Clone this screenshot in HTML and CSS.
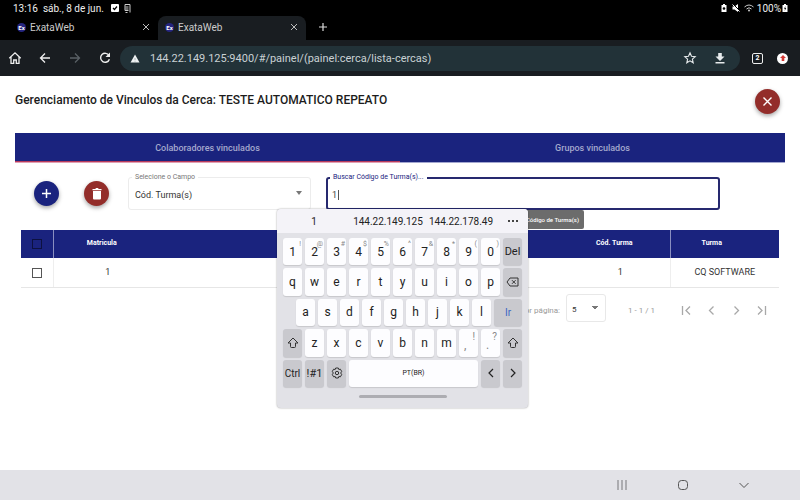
FILE: index.html
```html
<!DOCTYPE html>
<html lang="pt-BR">
<head>
<meta charset="utf-8">
<meta name="viewport" content="width=device-width, initial-scale=1">
<title>ExataWeb</title>
<link rel="stylesheet" href="styles.css">
</head>
<body>
<header class="status">
  <span>13:16</span>
  <span class="date">sáb., 8 de jun.</span>
  <svg width="8" height="8" viewBox="0 0 8 8"><rect width="8" height="8" rx="1" fill="#fff"/><path d="M2 4l1.500 1.500L6 2.500" fill="none" stroke="#000" stroke-width="1.200"/></svg>
  <svg class="doc" width="7" height="9" viewBox="0 0 7 9"><path d="M1 0.500h5v8M1.500 3h3M1.500 5h3M1 0.500v6h3.500M1.500 8.500h2" fill="none" stroke="#ccc"/></svg>
  <span class="push"></span>
  <svg width="6" height="8" viewBox="0 0 6 8"><path d="M0.500 1h1.500V0h2v1h1.500v7h-5z" fill="#fff"/><circle cx="3" cy="4.500" r="1.300" fill="#000"/></svg>
  <svg class="mute" width="8" height="8" viewBox="0 0 8 8"><path d="M0.500 2.500h2L6 0v8L2.500 5.500h-2z" fill="#fff"/><path d="M1 0l7 7" stroke="#000"/><path d="M0.500 0.500L7.500 7.500" stroke="#fff"/></svg>
  <svg class="wifi" width="10" height="8" viewBox="0 0 10 8"><path d="M0.500 3q4.500-4 9 0M2.500 5q2.500-2.500 5 0" fill="none" stroke="#ccc"/><circle cx="5" cy="6.500" r="1" fill="#ccc"/></svg>
  <span>100%</span>
  <svg width="6" height="8" viewBox="0 0 6 8"><path d="M0.500 1h1.500V0h2v1h1.500v7h-5z" fill="#fff"/><path d="M3.500 2L2 4.700h1L2.600 7 4.200 4h-1z" fill="#000"/></svg>
</header>

<nav class="tabs" aria-label="Abas">
  <div class="tab">
    <span class="fav">Ex</span><span class="name">ExataWeb</span>
    <button class="plain" aria-label="Fechar aba"><svg width="8" height="8" viewBox="0 0 8 8"><path d="M1 1l6 6M7 1L1 7" stroke="#bbb" fill="none"/></svg></button>
  </div>
  <div class="tab active">
    <span class="fav">Ex</span><span class="name">ExataWeb</span>
    <button class="plain" aria-label="Fechar aba"><svg width="8" height="8" viewBox="0 0 8 8"><path d="M1 1l6 6M7 1L1 7" stroke="#bbb" fill="none"/></svg></button>
  </div>
  <button class="plain new" aria-label="Nova aba"><svg width="10" height="10" viewBox="0 0 10 10"><path d="M5 1v8M1 5h8" stroke="#ddd" stroke-width="1.200"/></svg></button>
</nav>

<div class="toolbar">
  <button class="plain" aria-label="Início"><svg width="14" height="14" viewBox="0 0 14 14"><path d="M3 6v6.300h2.700V9h2.600v3.300H11V6M1.300 7.300L7 1.800l5.700 5.500" fill="none" stroke="#eee" stroke-width="1.300"/></svg></button>
  <button class="plain" aria-label="Voltar"><svg width="14" height="14" viewBox="0 0 14 14"><path d="M12 7H2.500M7 2.500L2.500 7 7 11.500" fill="none" stroke="#eee" stroke-width="1.300"/></svg></button>
  <button class="plain" aria-label="Avançar"><svg width="14" height="14" viewBox="0 0 14 14"><path d="M2 7h9.500M7 2.500L11.500 7 7 11.500" fill="none" stroke="#596065" stroke-width="1.300"/></svg></button>
  <button class="plain" aria-label="Recarregar"><svg width="14" height="14" viewBox="0 0 14 14"><path d="M11 4.500A4.500 4.500 0 1 0 11.400 8.200" fill="none" stroke="#eee" stroke-width="1.400"/><path d="M12 1.500V6H7.500z" fill="#eee"/></svg></button>
  <div class="omni">
    <svg width="10" height="9" viewBox="0 0 10 9"><path d="M5 0.500L9.500 8.500h-9z" fill="#eef1f2"/><path d="M5 4v2M5 6.800v.8" stroke="#9aa5a8" stroke-width=".8"/></svg>
    <input class="url" aria-label="Endereço" value="144.22.149.125:9400/#/painel/(painel:cerca/lista-cercas)">
    <button class="plain" aria-label="Favoritar"><svg width="14" height="14" viewBox="0 0 14 14"><path d="M7 1.800l1.500 3.500 3.700.3-2.800 2.500.8 3.700L7 9.900l-3.200 1.900.8-3.700L1.800 5.600l3.700-.3z" fill="none" stroke="#e6eaec" stroke-width="1.100"/></svg></button>
    <button class="plain" aria-label="Baixar"><svg width="12" height="12" viewBox="0 0 12 12"><path d="M4.200 1h3.600v3.500h2.700L6 9 1.500 4.500h2.700zM1.500 10h9v1.400h-9z" fill="#e6eaec"/></svg></button>
  </div>
  <button class="count" aria-label="2 abas abertas">2</button>
  <button class="update" aria-label="Atualização"><svg width="6" height="6" viewBox="0 0 6 6"><path d="M3 0l3 3H4.300v3H1.700V3H0z" fill="#d33a36"/></svg></button>
</div>

<main class="page">
  <div class="head">
    <h1>Gerenciamento de Vinculos da Cerca: TESTE AUTOMATICO REPEATO</h1>
    <button class="fab red" aria-label="Fechar"><svg width="11" height="11" viewBox="0 0 11 11"><path d="M1.500 1.500l8 8M9.500 1.500l-8 8" stroke="#fff" stroke-width="1.400"/></svg></button>
  </div>

  <div class="sections" role="tablist">
    <button role="tab" class="section on" aria-selected="true">Colaboradores vinculados</button>
    <button role="tab" class="section" aria-selected="false">Grupos vinculados</button>
  </div>

  <div class="filters">
    <button class="fab blue" aria-label="Adicionar"><svg width="11" height="11" viewBox="0 0 11 11"><path d="M5.500 1v9M1 5.500h9" stroke="#fff" stroke-width="1.500"/></svg></button>
    <button class="fab red" aria-label="Excluir"><svg width="12" height="14" viewBox="0 0 12 14"><path d="M2 4h8v7.500a1 1 0 0 1-1 1H3a1 1 0 0 1-1-1zM1.500 2h2.800l.7-1h2l.7 1h2.800v1.300h-9z" fill="#fff"/></svg></button>
    <div class="field pick">
      <label for="campo">Selecione o Campo</label>
      <select id="campo"><option>Cód. Turma(s)</option></select>
    </div>
    <div class="field search">
      <label for="busca">Buscar Código de Turma(s)...</label>
      <input id="busca" value="1">
      <span class="caret"></span>
      <div class="tip" role="tooltip">Buscar Código de Turma(s)</div>

      <section class="keyboard" aria-label="Teclado">
        <div class="suggest">
          <button>1</button><button>144.22.149.125</button><button>144.22.178.49</button><button aria-label="Mais"><svg width="10" height="4" viewBox="0 0 10 4"><path d="M0 1h2v2H0zM4 1h2v2H4zM8 1h2v2H8z" fill="#444"/></svg></button>
        </div>
        <div class="keys">
          <div class="row">
            <button>1<sup>!</sup></button><button>2<sup>@</sup></button><button>3<sup>#</sup></button><button>4<sup>$</sup></button><button>5<sup>%</sup></button><button>6<sup>^</sup></button><button>7<sup>&amp;</sup></button><button>8<sup>*</sup></button><button>9<sup>(</sup></button><button>0<sup>)</sup></button><button class="dark word">Del</button>
          </div>
          <div class="row">
            <button>q</button><button>w</button><button>e</button><button>r</button><button>t</button><button>y</button><button>u</button><button>i</button><button>o</button><button>p</button><button class="dark" aria-label="Apagar"><svg width="13" height="10" viewBox="0 0 13 10"><path d="M4 1h8v8H4L1 5zM6 3.200l3.600 3.600M9.600 3.200L6 6.800" fill="none" stroke="#333" stroke-linejoin="round"/></svg></button>
          </div>
          <div class="row home">
            <button>a</button><button>s</button><button>d</button><button>f</button><button>g</button><button>h</button><button>j</button><button>k</button><button>l</button><button class="dark go">Ir</button>
          </div>
          <div class="row">
            <button class="dark" aria-label="Maiúsculas"><svg width="12" height="12" viewBox="0 0 12 12"><path d="M6 1l5 5H8.500v3.500a1 1 0 0 1-1 1h-3a1 1 0 0 1-1-1V6H1z" fill="none" stroke="#333" stroke-linejoin="round"/></svg></button><button>z</button><button>x</button><button>c</button><button>v</button><button>b</button><button>n</button><button>m</button><button class="punct">,<sup>!</sup></button><button class="punct">.<sup>?</sup></button><button class="dark" aria-label="Maiúsculas"><svg width="12" height="12" viewBox="0 0 12 12"><path d="M6 1l5 5H8.500v3.500a1 1 0 0 1-1 1h-3a1 1 0 0 1-1-1V6H1z" fill="none" stroke="#333" stroke-linejoin="round"/></svg></button>
          </div>
          <div class="row">
            <button class="dark ctrl">Ctrl</button><button class="dark word">!#1</button><button class="dark" aria-label="Configurações"><svg width="12" height="12" viewBox="0 0 12 12"><path d="M4.700 1h2.600l.5 1.500 1.600-.3 1.300 2.200L9.700 6l1 1.600-1.300 2.200-1.600-.3L7.300 11H4.700l-.5-1.500-1.600.3-1.300-2.200L2.300 6l-1-1.600 1.300-2.200 1.600.3z" fill="none" stroke="#333" stroke-linejoin="round"/><circle cx="6" cy="6" r="1.700" fill="none" stroke="#333"/></svg></button><button class="space">PT(BR)</button><button class="dark" aria-label="Esquerda"><svg width="8" height="12" viewBox="0 0 8 12"><path d="M6 2L2 6l4 4" fill="none" stroke="#222" stroke-width="1.200"/></svg></button><button class="dark" aria-label="Direita"><svg width="8" height="12" viewBox="0 0 8 12"><path d="M2 2l4 4-4 4" fill="none" stroke="#222" stroke-width="1.200"/></svg></button>
          </div>
        </div>
        <div class="handle"></div>
      </section>
    </div>
  </div>

  <table>
    <colgroup><col class="c-check"><col class="c-mat"><col><col class="c-cod"><col class="c-tur"></colgroup>
    <thead><tr><th class="line"><input type="checkbox" aria-label="Selecionar todos"></th><th>Matricula</th><th></th><th class="line">Cód. Turma</th><th class="last">Turma</th></tr></thead>
    <tbody><tr><td class="line"><input type="checkbox" aria-label="Selecionar linha"></td><td>1</td><td></td><td class="line">1</td><td>CQ SOFTWARE</td></tr></tbody>
  </table>

  <div class="pager">
    <label for="itens">Itens por página:</label>
    <select id="itens"><option>5</option></select>
    <span class="range">1 - 1 / 1</span>
    <button class="plain" aria-label="Primeira página"><svg width="11" height="11" viewBox="0 0 11 11"><path d="M1.500 1v9M9 1.500l-4 4 4 4" fill="none" stroke="#a8a8a8" stroke-width="1.300"/></svg></button>
    <button class="plain" aria-label="Página anterior"><svg width="11" height="11" viewBox="0 0 11 11"><path d="M7.500 1.500l-4 4 4 4" fill="none" stroke="#a8a8a8" stroke-width="1.300"/></svg></button>
    <button class="plain" aria-label="Próxima página"><svg width="11" height="11" viewBox="0 0 11 11"><path d="M3.500 1.500l4 4-4 4" fill="none" stroke="#a8a8a8" stroke-width="1.300"/></svg></button>
    <button class="plain" aria-label="Última página"><svg width="11" height="11" viewBox="0 0 11 11"><path d="M9.500 1v9M2 1.500l4 4-4 4" fill="none" stroke="#a8a8a8" stroke-width="1.300"/></svg></button>
  </div>
</main>

<footer class="navbar">
  <button class="plain" aria-label="Recentes"><svg width="12" height="12" viewBox="0 0 12 12"><path d="M2 1v10M6 1v10M10 1v10" stroke="#77777b"/></svg></button>
  <button class="plain" aria-label="Início"><svg width="12" height="12" viewBox="0 0 12 12"><rect x="1.500" y="1.500" width="9" height="9" rx="3" fill="none" stroke="#555"/></svg></button>
  <button class="plain" aria-label="Ocultar teclado"><svg width="12" height="12" viewBox="0 0 12 12"><path d="M1.500 4L6 8.500 10.500 4" fill="none" stroke="#555"/></svg></button>
</footer>
</body>
</html>
```
FILE: styles.css
```css
* { box-sizing: border-box; }
body {
  margin: 0;
  min-height: 100vh;
  display: flex;
  flex-direction: column;
  font-family: Roboto, "Liberation Sans", sans-serif;
  font-size: 9px;
  color: #333;
  background: #fff;
}
button, input, select { font: inherit; color: inherit; margin: 0; }
button { border: 0; padding: 0; }
svg { display: block; flex: none; }
.plain {
  background: none;
  display: flex;
  align-items: center;
  justify-content: center;
}

.status {
  height: 16px;
  padding: 0 12px 0 13px;
  display: flex;
  align-items: center;
  gap: 1px;
  background: #000;
  color: #eee;
  font-size: 10px;
}
.date { margin: 0 6px 0 4px; }
.doc { margin-left: 4px; }
.push { flex: 1; }
.mute { margin-left: 4px; }
.wifi { margin: 0 2px 0 3px; }

.tabs {
  height: 24px;
  display: flex;
  padding-left: 10px;
  background: #000;
  color: #ccc;
  font-size: 10px;
}
.tab {
  width: 148px;
  display: flex;
  align-items: center;
  gap: 4px;
  padding: 0 8px 2px 7px;
}
.tab.active { background: #191d21; border-radius: 8px 8px 0 0; }
.name { flex: 1; }
.fav {
  width: 9px;
  height: 9px;
  border-radius: 50%;
  background: #25257f;
  color: #fff;
  font-size: 6px;
  font-weight: 700;
  line-height: 9px;
  text-align: center;
}
.new { margin-left: 12px; padding-bottom: 2px; }

.toolbar {
  height: 36px;
  display: flex;
  align-items: center;
  gap: 16px;
  padding: 0 12px 0 8px;
  background: #191d21;
}
.omni {
  flex: 1;
  height: 25px;
  margin-left: -8px;
  padding: 0 14px 0 10px;
  display: flex;
  align-items: center;
  gap: 10px;
  border-radius: 13px;
  background: #223238;
  color: #c9d1d4;
}
.omni .plain + .plain { margin-left: 7px; }
.url { flex: 1; min-width: 0; border: 0; padding: 0; background: none; font-size: 11px; outline: 0; }
.count {
  width: 11px;
  height: 11px;
  margin-left: -4px;
  border: 1px solid #eee;
  border-radius: 2px;
  background: none;
  color: #fff;
  font-size: 7px;
  font-weight: 700;
  line-height: 9px;
}
.update {
  width: 11px;
  height: 11px;
  margin-left: -2px;
  border-radius: 50%;
  background: #fff;
  display: flex;
  align-items: center;
  justify-content: center;
}

.page { flex: 1; padding: 0 15px; }
.head {
  height: 57px;
  padding: 13px 5px 0 0;
  display: flex;
  justify-content: space-between;
  align-items: flex-start;
}
h1 { margin: 3px 0 0; font-size: 12px; line-height: 16px; font-weight: 500; color: #1c1c1c; }
.fab {
  width: 25px;
  height: 25px;
  flex: none;
  border-radius: 50%;
  display: flex;
  align-items: center;
  justify-content: center;
  box-shadow: 0 2px 4px rgba(0, 0, 0, .35);
}
.red { background: #932d2a; }
.blue { background: #1a237e; }

.sections { display: flex; height: 30px; }
.section {
  flex: 1;
  background: #1a237e;
  color: #a4a8cd;
  font-weight: 500;
  box-shadow: inset 0 -1px #a3a7d0;
}
.section.on { box-shadow: inset 0 -1px #e0a0b4, inset 0 -2px #b83a5c; }

.filters {
  display: flex;
  align-items: flex-start;
  gap: 25px;
  padding: 14px 65px 0 19px;
  height: 67px;
}
.filters .fab { margin-top: 4px; }
.field { position: relative; height: 33px; }
.field label {
  position: absolute;
  top: -4px;
  left: 4px;
  padding: 0 3px;
  background: #fff;
  font-size: 7px;
  line-height: 9px;
  white-space: nowrap;
}
.field select, .field > input {
  width: 100%;
  height: 100%;
  border: 1px solid #ececec;
  border-radius: 3px;
  padding: 2px 6px 0;
  outline: 0;
}
select {
  appearance: none;
  background: #fff;
}
.field.pick { flex: 183; margin-left: -6px; }
.field.pick label { color: #777; }
.field.pick::after {
  content: "";
  position: absolute;
  right: 9px;
  top: 14px;
  border: 3px solid transparent;
  border-top: 4px solid #777;
  border-bottom: 0;
}
.field.search { flex: 394; margin-left: -10px; }
.field.search label { color: #1a237e; }
.field.search > input { border: 2px solid #26296f; padding: 2px 4px 0; color: #444; }
.caret { position: absolute; left: 12px; top: 13px; width: 1px; height: 10px; background: #555; }
.tip {
  position: absolute;
  top: 33px;
  right: 136px;
  padding: 0 5px;
  border-radius: 2px;
  background: #6c6c6c;
  color: #fff;
  font-size: 6px;
  font-weight: 500;
  line-height: 19px;
  white-space: nowrap;
}

.keyboard {
  position: absolute;
  top: 32px;
  left: -49px;
  width: 251px;
  border-radius: 4px;
  background: #e2e2e7;
  box-shadow: 0 0 2px rgba(0, 0, 0, .4);
  font-size: 12px;
  color: #222;
  overflow: hidden;
}
.suggest {
  height: 24px;
  display: grid;
  grid-template-columns: 74px 74px 72px 31px;
  background: #f4f3f8;
  font-size: 10px;
}
.suggest button { background: none; display: flex; align-items: center; justify-content: center; }
.keys { height: 154px; padding: 5px 6px 0; display: grid; grid-auto-rows: 1fr; gap: 3px; }
.row { display: flex; gap: 3px; }
.row button {
  position: relative;
  width: 19px;
  flex: none;
  border-radius: 3px;
  background: #fdfdff;
  box-shadow: 0 1px 1px rgba(0, 0, 0, .12);
  display: flex;
  align-items: center;
  justify-content: center;
}
.row .dark { background: #c9c9ce; }
.row .word { font-size: 11px; }
.row .ctrl { font-size: 10px; }
.row .go { flex: 1; color: #3a66c4; font-size: 10px; }
.row .space { flex: 1; font-size: 7px; }
.home { padding-left: 13px; }
.row sup { position: absolute; top: 2px; right: 1px; font-size: 7px; line-height: 8px; color: #888; }
.row .punct { color: #888; justify-content: flex-start; padding: 4px 0 0 5px; }
.row .punct sup { font-size: 10px; line-height: 12px; right: 3px; }
.handle { width: 88px; height: 3px; margin: 8px auto 10px; border-radius: 2px; background: #adadb2; }

table {
  width: calc(100% - 12px);
  margin: 0 6px;
  border-collapse: collapse;
  table-layout: fixed;
}
.c-check { width: 32px; }
.c-mat { width: 109px; }
.c-cod { width: 99px; }
.c-tur { width: 109px; }
th, td { height: 29px; padding: 0; text-align: center; }
th { background: #1a237e; color: #fff; font-size: 7px; font-weight: 700; padding: 0 12px 3px 0; height: 28px; }
td { border-bottom: 1px solid #e6e6e6; }
td.line { border-right: 1px solid #eee; }
th.line { border-right: 1px solid #8a8fc0; }
th:first-child { padding: 0; }
th.last { padding-right: 26px; }
table input {
  appearance: none;
  width: 10px;
  height: 10px;
  border: 1px solid #555;
  vertical-align: middle;
}
th input { border-color: #0d1140; }

.pager {
  display: flex;
  align-items: center;
  justify-content: flex-end;
  height: 45px;
  padding-right: 18px;
  gap: 14px;
  color: #999;
  font-size: 8px;
}
.pager select {
  width: 40px;
  height: 28px;
  margin: 0 8px 4px -8px;
  padding: 2px 5px 0;
  border: 1px solid #e8e8e8;
  border-radius: 3px;
  color: #333;
  background:
    linear-gradient(to bottom right, #777 50%, transparent 50%) 28px 11px / 3px 4px no-repeat,
    linear-gradient(to bottom left, #777 50%, transparent 50%) 25px 11px / 3px 4px no-repeat, #fff;
}
.range { margin-right: 12px; }

.navbar {
  height: 30px;
  padding-right: 50px;
  display: flex;
  justify-content: flex-end;
  align-items: center;
  gap: 49px;
  background: #e2e2e7;
}
```
